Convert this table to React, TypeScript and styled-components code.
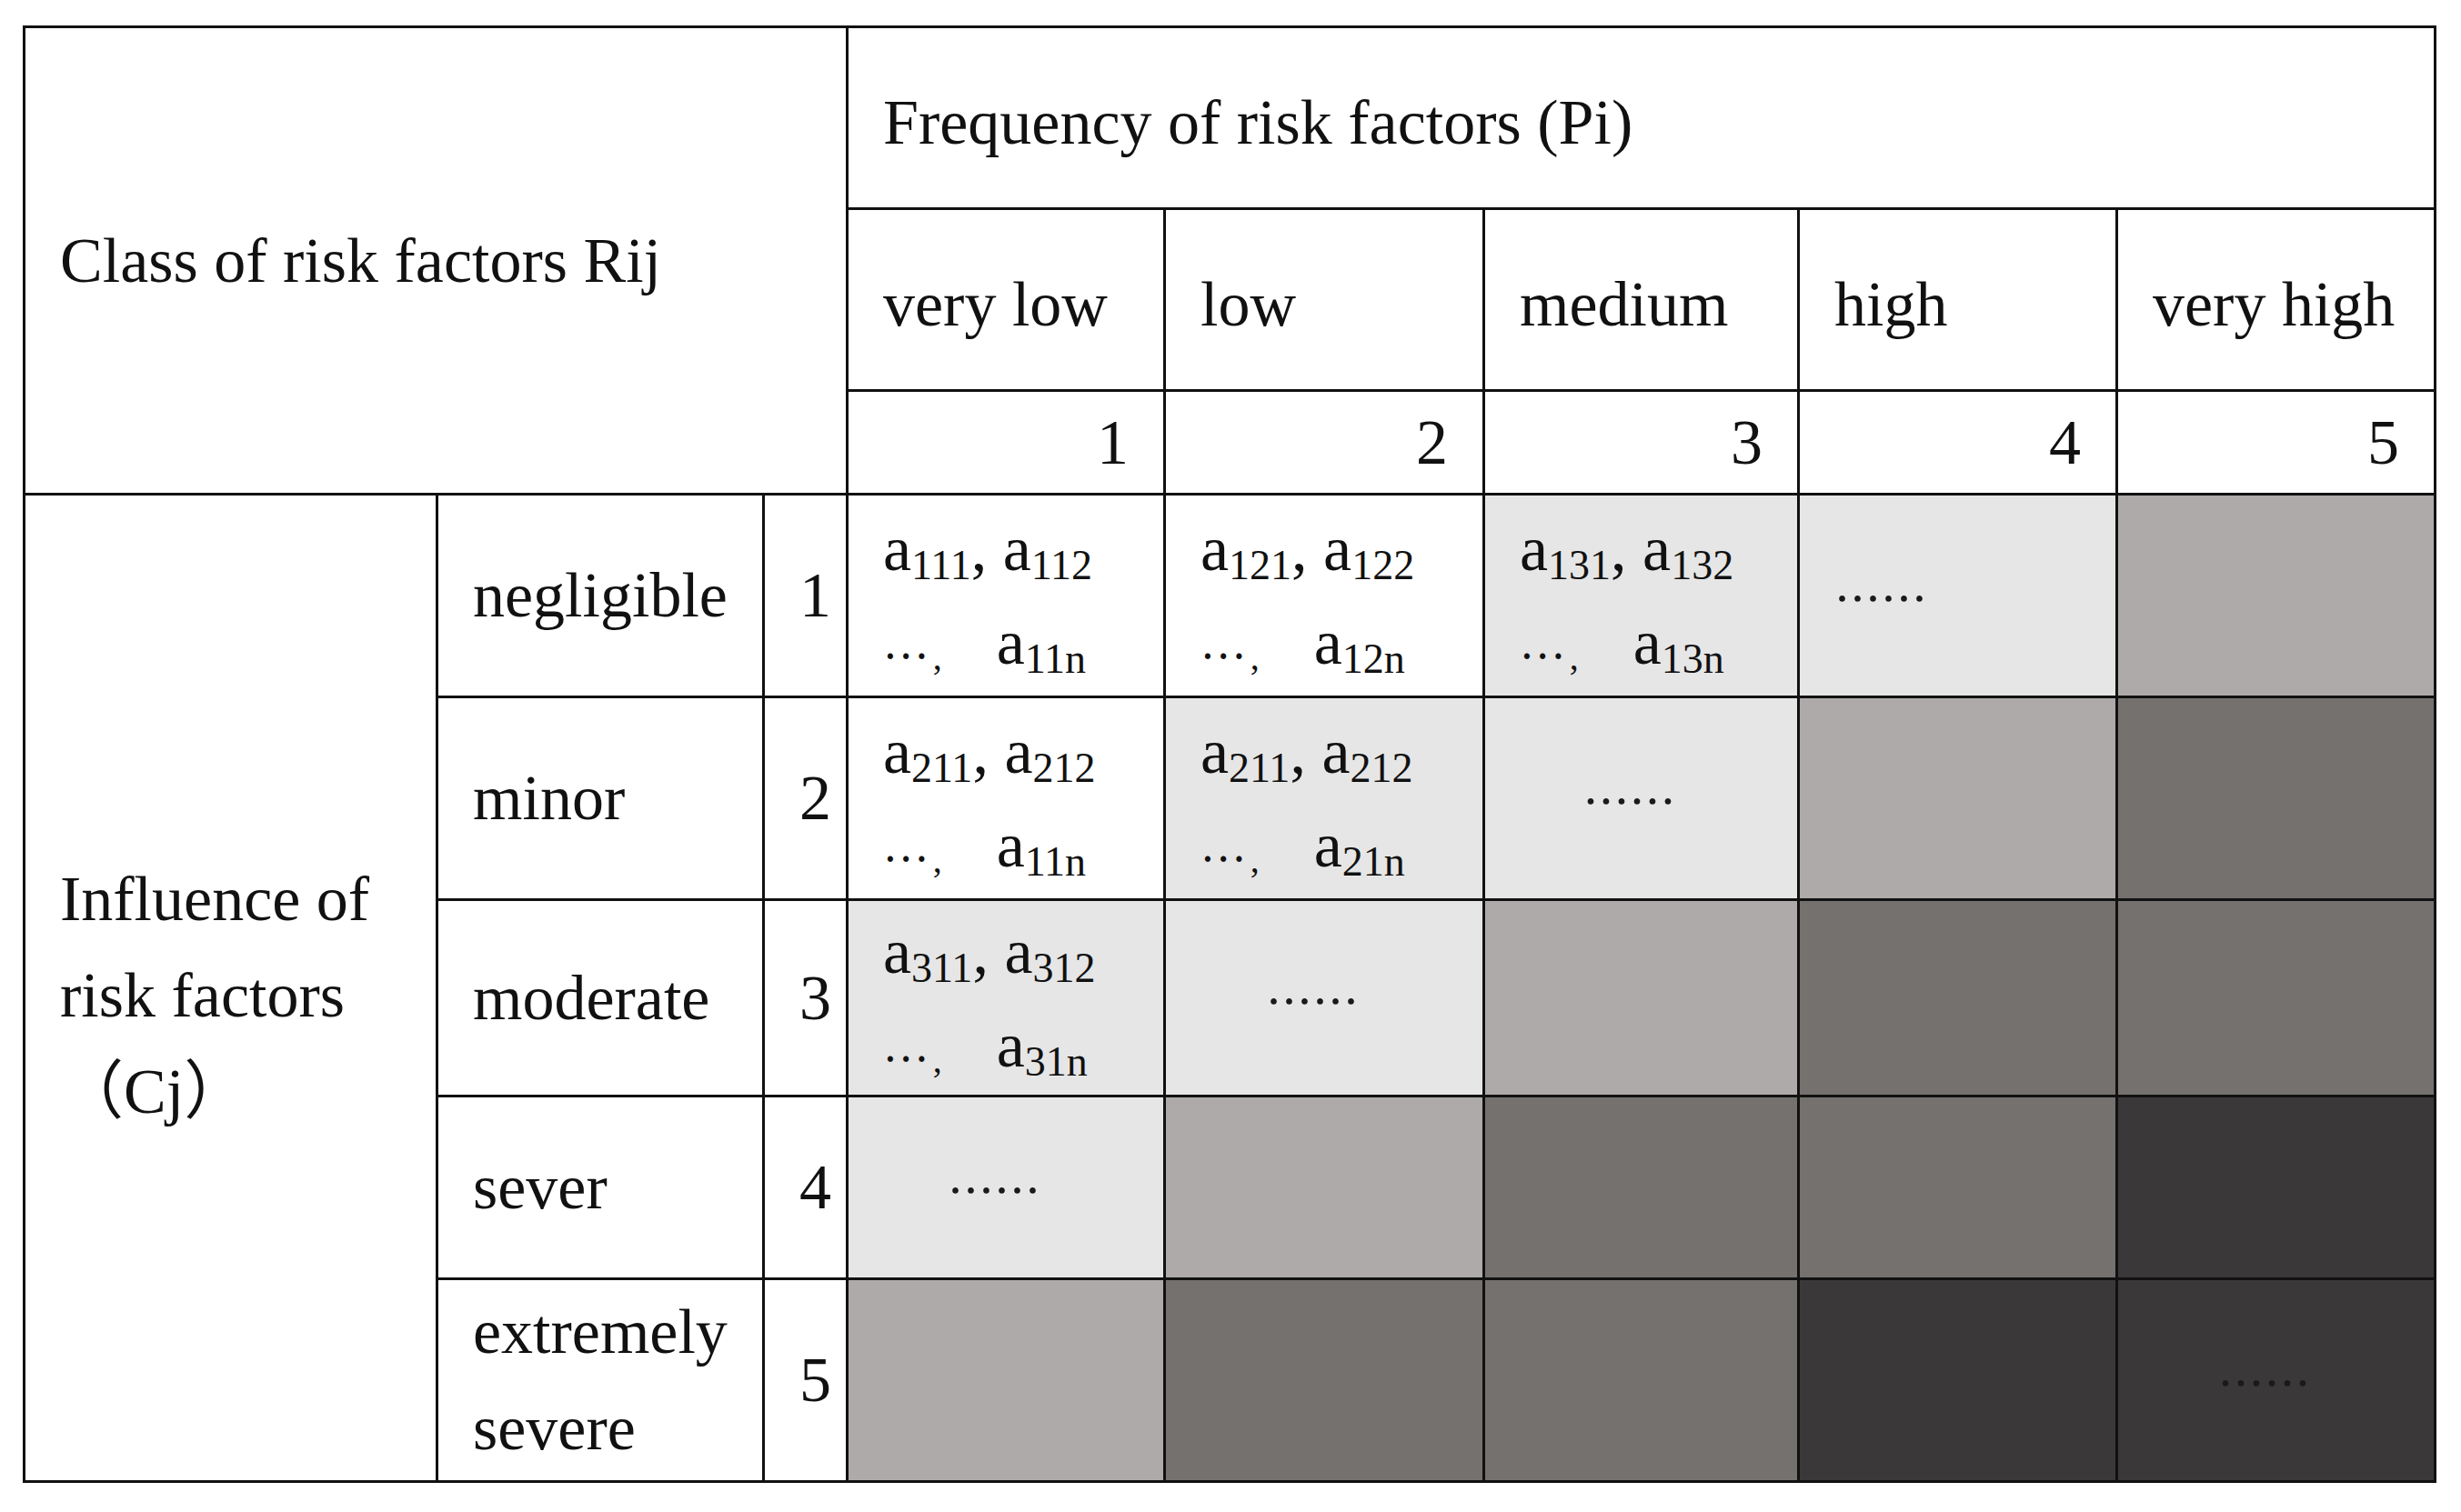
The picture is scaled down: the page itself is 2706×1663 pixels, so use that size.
import React from "react";
import styled, {createGlobalStyle} from "styled-components";

type Tone = "white" | "light" | "mid" | "dark" | "darkest";

const tones: Record<Tone, string> = {
  white: "#ffffff",
  light: "#e6e6e6",
  mid: "#aeaaa9",
  dark: "#75716f",
  darkest: "#3a3839",
};

const GlobalStyle = createGlobalStyle`
  html, body {
    margin: 0;
    padding: 0;
    background: #fff;
  }
  body {
    font-family: "Liberation Serif", "Noto Sans CJK SC", serif;
    color: #111;
  }
`;

const Page = styled.div`
  padding: 28px 0 0 25px;
`;

const Table = styled.table`
  border-collapse: collapse;
  table-layout: fixed;
  font-size: 70px;
  line-height: 1;
`;

const Row = styled.tr<{$h: number}>`
  height: ${(p) => p.$h}px;
`;

const Cell = styled.td`
  border: 3px solid #111;
  padding: 0 38px;
  vertical-align: middle;
  white-space: nowrap;
  background: #fff;
`;

const TitleCell = styled(Cell)`
  padding-top: 10px;
`;

const NumCell = styled(Cell)<{$pad?: number}>`
  text-align: right;
  padding-right: ${(p) => p.$pad ?? 38}px;
`;

const SideCell = styled(Cell)`
  line-height: 106px;
  padding-top: 16px;
`;

const LabelCell = styled(Cell)`
  line-height: 106px;
`;

const DataCell = styled(Cell)<{$tone: Tone; $center?: boolean}>`
  background: ${(p) => tones[p.$tone]};
  text-align: ${(p) => (p.$center ? "center" : "left")};
  padding-right: ${(p) => (p.$center ? 64 : 38)}px;
`;

const Entry = styled.div`
  line-height: 103px;
`;

const Sub = styled.span`
  font-size: 46px;
  line-height: 0;
  vertical-align: -10px;
`;

const Ellipsis = styled.span`
  font-family: "Noto Sans CJK SC", sans-serif;
  font-size: 46px;
  line-height: 0;
  vertical-align: 6px;
`;

const Comma = styled.span`
  font-size: 40px;
  line-height: 0;
  vertical-align: -6px;
  margin: 0 60px 0 6px;
`;

const Dots = styled.span`
  font-family: "Noto Sans CJK SC", sans-serif;
  font-size: 51px;
  line-height: 0;
  color: #1a1a1a;
`;

const colWidths = [454, 359, 92, 349, 351, 346, 350, 350];

type Content = {first: [string, string]; last: string} | "dots" | null;

interface CellSpec {
  tone: Tone;
  content: Content;
  center?: boolean;
}

const pair = (a: string, b: string, n: string): Content => ({first: [a, b], last: n});

const grid: {label: React.ReactNode; num: number; h: number; cells: CellSpec[]}[] = [
  {
    label: "negligible",
    num: 1,
    h: 223,
    cells: [
      {tone: "white", content: pair("111", "112", "11n")},
      {tone: "white", content: pair("121", "122", "12n")},
      {tone: "light", content: pair("131", "132", "13n")},
      {tone: "light", content: "dots"},
      {tone: "mid", content: null},
    ],
  },
  {
    label: "minor",
    num: 2,
    h: 223,
    cells: [
      {tone: "white", content: pair("211", "212", "11n")},
      {tone: "light", content: pair("211", "212", "21n")},
      {tone: "light", content: "dots", center: true},
      {tone: "mid", content: null},
      {tone: "dark", content: null},
    ],
  },
  {
    label: "moderate",
    num: 3,
    h: 216,
    cells: [
      {tone: "light", content: pair("311", "312", "31n")},
      {tone: "light", content: "dots", center: true},
      {tone: "mid", content: null},
      {tone: "dark", content: null},
      {tone: "dark", content: null},
    ],
  },
  {
    label: "sever",
    num: 4,
    h: 201,
    cells: [
      {tone: "light", content: "dots", center: true},
      {tone: "mid", content: null},
      {tone: "dark", content: null},
      {tone: "dark", content: null},
      {tone: "darkest", content: null},
    ],
  },
  {
    label: (
      <>
        extremely
        <br />
        severe
      </>
    ),
    num: 5,
    h: 223,
    cells: [
      {tone: "mid", content: null},
      {tone: "dark", content: null},
      {tone: "dark", content: null},
      {tone: "darkest", content: null},
      {tone: "darkest", content: "dots", center: true},
    ],
  },
];

const levels = ["very low", "low", "medium", "high", "very high"];

const renderContent = (c: Content) => {
  if (c === null) return null;
  if (c === "dots") return <Dots>……</Dots>;
  return (
    <>
      <Entry>
        a<Sub>{c.first[0]}</Sub>, a<Sub>{c.first[1]}</Sub>
      </Entry>
      <Entry>
        <Ellipsis>…</Ellipsis>
        <Comma>,</Comma>a<Sub>{c.last}</Sub>
      </Entry>
    </>
  );
};

const App: React.FC = () => {
  return (
    <Page>
      <GlobalStyle />
      <Table>
        <colgroup>
          {colWidths.map((w, i) => (
            <col key={i} style={{width: w}} />
          ))}
        </colgroup>
        <tbody>
          <Row $h={200}>
            <Cell colSpan={3} rowSpan={3}>
              Class of risk factors Rij
            </Cell>
            <TitleCell colSpan={5}>Frequency of risk factors (Pi)</TitleCell>
          </Row>
          <Row $h={200}>
            {levels.map((l) => (
              <TitleCell key={l}>{l}</TitleCell>
            ))}
          </Row>
          <Row $h={114}>
            {levels.map((l, i) => (
              <NumCell key={l}>{i + 1}</NumCell>
            ))}
          </Row>
          {grid.map((row, r) => (
            <Row $h={row.h} key={r}>
              {r === 0 && (
                <SideCell rowSpan={5}>
                  Influence of
                  <br />
                  risk factors
                  <br />
                  （Cj）
                </SideCell>
              )}
              <LabelCell>{row.label}</LabelCell>
              <NumCell $pad={16}>{row.num}</NumCell>
              {row.cells.map((c, i) => (
                <DataCell key={i} $tone={c.tone} $center={c.center}>
                  {renderContent(c.content)}
                </DataCell>
              ))}
            </Row>
          ))}
        </tbody>
      </Table>
    </Page>
  );
};

export default App;
